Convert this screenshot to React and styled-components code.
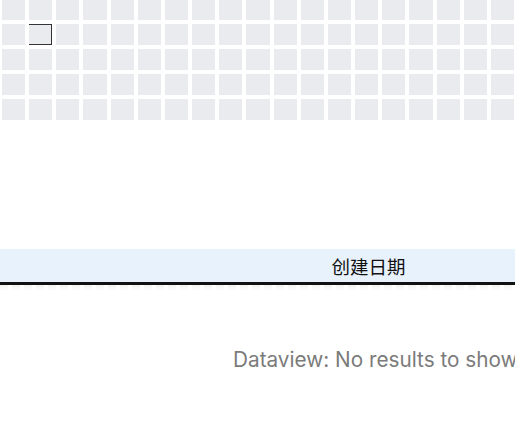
import React from 'react'
import styled, { createGlobalStyle } from 'styled-components'

const GlobalStyle = createGlobalStyle`
    html, body {
        margin: 0;
        padding: 0;
        background: #ffffff;
        overflow: hidden;
    }
    body {
        font-family: Inter, "Noto Sans CJK SC", sans-serif;
    }
`

const COLS = 19
const ROWS = 5

const App = () => {
    const cells = []
    for (let r = 0; r < ROWS; r++) {
        for (let c = 0; c < COLS; c++) {
            cells.push(<Cell key={r + '-' + c} active={r === 1 && c === 1} />)
        }
    }

    return (
        <Page>
            <GlobalStyle />
            <Heatmap>{cells}</Heatmap>
            <TableHead>
                <HeadCell />
                <HeadCell wide>创建日期</HeadCell>
            </TableHead>
            <DashedShadow />
            <EmptyMessage>Dataview: No results to show</EmptyMessage>
        </Page>
    )
}

export default App

const Page = styled.div`
    width: 515px;
    height: 423px;
    overflow: hidden;
`

const Heatmap = styled.div`
    display: grid;
    grid-template-columns: repeat(${COLS}, 1fr);
    grid-auto-rows: 21px;
    gap: 4px;
    width: 512px;
    margin: -1px 0 0 2px;
`

const Cell = styled.div`
    background-color: #eaebef;
    box-sizing: border-box;
    border: ${p => (p.active ? '1px solid #333333' : 'none')};
    border-left: none;
`

const TableHead = styled.div`
    display: flex;
    margin-top: 129px;
    height: 33px;
    background-color: #e8f2fc;
    border-bottom: 3px solid #111111;
`

const HeadCell = styled.div`
    flex: ${p => (p.wide ? '0 0 293px' : '0 0 222px')};
    display: flex;
    justify-content: center;
    align-items: center;
    font-family: "Noto Sans CJK SC", sans-serif;
    font-size: 18.5px;
    color: #111111;
`

const DashedShadow = styled.div`
    height: 5px;
    background: repeating-linear-gradient(
        90deg,
        #efefef 0px,
        #efefef 8px,
        #ffffff 8px,
        #ffffff 12px
    );
    opacity: 0.8;
    -webkit-mask-image: linear-gradient(to bottom, black, transparent);
    mask-image: linear-gradient(to bottom, black, transparent);
`

const EmptyMessage = styled.div`
    margin-top: 58px;
    padding-left: 233px;
    font-family: Inter, sans-serif;
    font-size: 20.75px;
    line-height: 24px;
    color: #7b7b7b;
    white-space: nowrap;
`
